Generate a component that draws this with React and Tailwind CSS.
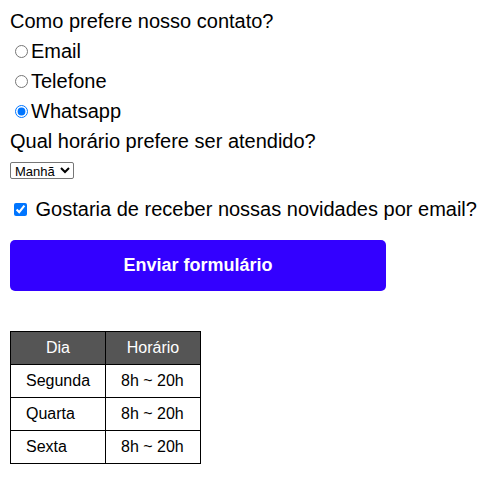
import React, { useState } from 'react';

const horarios = [
  { dia: 'Segunda', hora: '8h ~ 20h' },
  { dia: 'Quarta', hora: '8h ~ 20h' },
  { dia: 'Sexta', hora: '8h ~ 20h' },
];

const App = () => {
  const [contato, setContato] = useState('whatsapp');
  const [novidades, setNovidades] = useState(true);

  return (
    <div className="p-[10px] font-['Liberation_Sans',Arial,sans-serif] text-black bg-white min-h-screen">
      <form onSubmit={(e) => e.preventDefault()}>
        <p className="text-[20px] leading-[23px]">Como prefere nosso contato?</p>

        {['Email', 'Telefone', 'Whatsapp'].map((opt) => (
          <label key={opt} className="block mt-[7px] h-[23px] text-[20px] leading-[23px]">
            <input
              type="radio"
              name="contato"
              checked={contato === opt.toLowerCase()}
              onChange={() => setContato(opt.toLowerCase())}
              className="mt-[3px] mr-[3px] ml-[5px] mb-0"
            />
            {opt}
          </label>
        ))}

        <p className="mt-[7px] text-[20px] leading-[23px]">Qual horário prefere ser atendido?</p>
        <select className="mt-[9px] block h-[17px] w-[64px] border border-[#767676] rounded-[2px] text-[13px] leading-[15px] bg-white">
          <option>Manhã</option>
          <option>Tarde</option>
          <option>Noite</option>
        </select>

        <label className="block mt-[19px] h-[23px] text-[20px] leading-[23px]">
          <input
            type="checkbox"
            checked={novidades}
            onChange={(e) => setNovidades(e.target.checked)}
            className="mt-[3px] mr-[3px] ml-[4px] mb-[3px]"
          />{' '}
          Gostaria de receber nossas novidades por email?
        </label>

        <button
          type="submit"
          className="mt-[19px] block w-[376px] h-[51px] rounded-[5px] bg-[#3300ff] text-white text-[18px] font-bold"
        >
          Enviar formulário
        </button>
      </form>

      <table className="mt-[40px] w-[190px] table-fixed border-collapse text-[16px] leading-[18px] whitespace-nowrap">
        <thead>
          <tr className="bg-[#555555] text-white">
            <th className="w-[95px] h-[33px] px-[15px] border border-black font-normal">Dia</th>
            <th className="w-[95px] h-[33px] px-[15px] border border-black font-normal">Horário</th>
          </tr>
        </thead>
        <tbody>
          {horarios.map((h) => (
            <tr key={h.dia}>
              <td className="h-[33px] px-[15px] border border-black">{h.dia}</td>
              <td className="h-[33px] px-[15px] border border-black">{h.hora}</td>
            </tr>
          ))}
        </tbody>
      </table>
    </div>
  );
};

export default App;
